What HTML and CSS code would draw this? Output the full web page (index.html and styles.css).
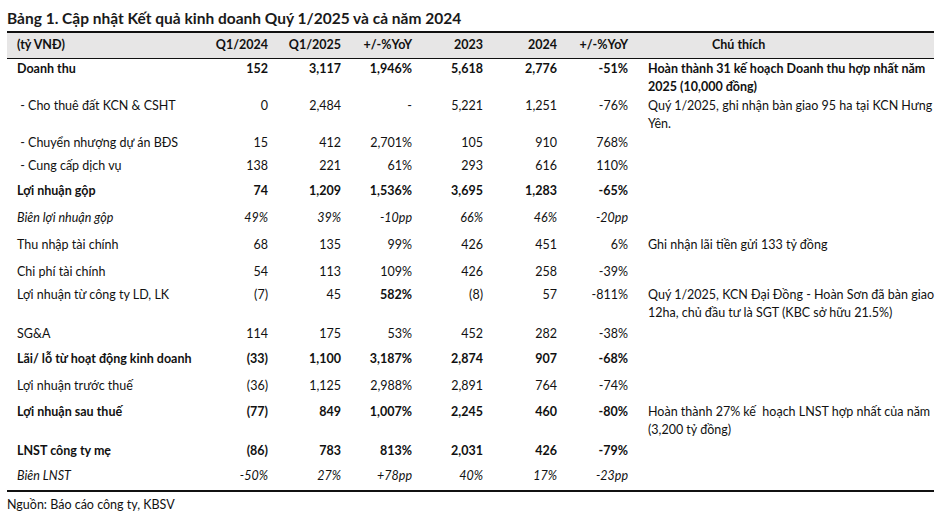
FILE: index.html
```html
<!DOCTYPE html>
<html lang="vi">
<head>
<meta charset="utf-8">
<title>Bảng 1</title>
<link rel="stylesheet" href="styles.css">
</head>
<body>
<div class="page">
  <div class="title">Bảng 1. Cập nhật Kết quả kinh doanh Quý 1/2025 và cả năm 2024</div>
  <table class="fin">
    <colgroup>
      <col class="c-label"><col class="c-a"><col class="c-b"><col class="c-c"><col class="c-d"><col class="c-e"><col class="c-f"><col class="c-note">
    </colgroup>
    <thead>
      <tr>
        <th class="lbl">(tỷ VNĐ)</th>
        <th>Q1/2024</th>
        <th>Q1/2025</th>
        <th>+/-%YoY</th>
        <th>2023</th>
        <th>2024</th>
        <th>+/-%YoY</th>
        <th class="note-h">Chú thích</th>
      </tr>
    </thead>
    <tbody>
      <tr class="b h37">
        <td class="lbl">Doanh thu</td><td>152</td><td>3,117</td><td>1,946%</td><td>5,618</td><td>2,776</td><td>-51%</td>
        <td class="note">Hoàn thành 31 kế hoạch Doanh thu hợp nhất năm<br>2025 (10,000 đồng)</td>
      </tr>
      <tr class="h37">
        <td class="lbl">&nbsp;- Cho thuê đất KCN &amp; CSHT</td><td>0</td><td>2,484</td><td>-</td><td>5,221</td><td>1,251</td><td>-76%</td>
        <td class="note">Quý 1/2025, ghi nhận bàn giao 95 ha tại KCN Hưng<br>Yên.</td>
      </tr>
      <tr class="h23">
        <td class="lbl">&nbsp;- Chuyển nhượng dự án BĐS</td><td>15</td><td>412</td><td>2,701%</td><td>105</td><td>910</td><td>768%</td><td class="note"></td>
      </tr>
      <tr class="h25">
        <td class="lbl">&nbsp;- Cung cấp dịch vụ</td><td>138</td><td>221</td><td>61%</td><td>293</td><td>616</td><td>110%</td><td class="note"></td>
      </tr>
      <tr class="b h27">
        <td class="lbl">Lợi nhuận gộp</td><td>74</td><td>1,209</td><td>1,536%</td><td>3,695</td><td>1,283</td><td>-65%</td><td class="note"></td>
      </tr>
      <tr class="i h27">
        <td class="lbl">Biên lợi nhuận gộp</td><td>49%</td><td>39%</td><td>-10pp</td><td>66%</td><td>46%</td><td>-20pp</td><td class="note"></td>
      </tr>
      <tr class="h27">
        <td class="lbl">Thu nhập tài chính</td><td>68</td><td>135</td><td>99%</td><td>426</td><td>451</td><td>6%</td>
        <td class="note">Ghi nhận lãi tiền gửi 133 tỷ đồng</td>
      </tr>
      <tr class="h23">
        <td class="lbl">Chi phí tài chính</td><td>54</td><td>113</td><td>109%</td><td>426</td><td>258</td><td>-39%</td><td class="note"></td>
      </tr>
      <tr class="h39">
        <td class="lbl">Lợi nhuận từ công ty LD, LK</td><td>(7)</td><td>45</td><td class="strong">582%</td><td>(8)</td><td>57</td><td>-811%</td>
        <td class="note">Quý 1/2025, KCN Đại Đồng - Hoàn Sơn đã bàn giao<br>12ha, chủ đầu tư là SGT (KBC sở hữu 21.5%)</td>
      </tr>
      <tr class="h25">
        <td class="lbl">SG&amp;A</td><td>114</td><td>175</td><td>53%</td><td>452</td><td>282</td><td>-38%</td><td class="note"></td>
      </tr>
      <tr class="b h27">
        <td class="lbl">Lãi/ lỗ từ hoạt động kinh doanh</td><td>(33)</td><td>1,100</td><td>3,187%</td><td>2,874</td><td>907</td><td>-68%</td><td class="note"></td>
      </tr>
      <tr class="h26">
        <td class="lbl">Lợi nhuận trước thuế</td><td>(36)</td><td>1,125</td><td>2,988%</td><td>2,891</td><td>764</td><td>-74%</td><td class="note"></td>
      </tr>
      <tr class="b h39">
        <td class="lbl">Lợi nhuận sau thuế</td><td>(77)</td><td>849</td><td>1,007%</td><td>2,245</td><td>460</td><td>-80%</td>
        <td class="note regular">Hoàn thành 27% kế&nbsp; hoạch LNST hợp nhất của năm<br>(3,200 tỷ đồng)</td>
      </tr>
      <tr class="b h25">
        <td class="lbl">LNST công ty mẹ</td><td>(86)</td><td>783</td><td>813%</td><td>2,031</td><td>426</td><td>-79%</td><td class="note"></td>
      </tr>
      <tr class="i h24 last">
        <td class="lbl">Biên LNST</td><td>-50%</td><td>27%</td><td>+78pp</td><td>40%</td><td>17%</td><td>-23pp</td><td class="note"></td>
      </tr>
    </tbody>
  </table>
  <div class="source">Nguồn: Báo cáo công ty, KBSV</div>
</div>
</body>
</html>
```
FILE: styles.css
```css
html, body {
  margin: 0;
  padding: 0;
  background: #ffffff;
}

.page {
  padding: 0 7px;
  font-family: Lato, "Liberation Sans", sans-serif;
  font-size: 12.5px;
  color: #111111;
}

.title {
  padding-top: 8px;
  line-height: 20px;
  height: 20px;
  margin-bottom: 3px;
  font-size: 15.5px;
  font-weight: 700;
  color: #1a1a1a;
}

.fin {
  width: 926px;
  table-layout: fixed;
  border-collapse: separate;
  border-spacing: 0;
}

.c-label { width: 191px; }
.c-a { width: 70px; }
.c-b { width: 73px; }
.c-c { width: 71px; }
.c-d { width: 71px; }
.c-e { width: 74px; }
.c-f { width: 71px; }
.c-note { width: 306px; }

.fin th {
  background: #e7e6e6;
  border-top: 2px solid #111111;
  border-bottom: 1px solid #111111;
  height: 24px;
  padding: 0 0 1px 0;
  font-weight: 700;
  text-align: right;
  vertical-align: middle;
  line-height: 18px;
  white-space: nowrap;
}

.fin th.lbl {
  text-align: left;
  padding-left: 10px;
}

.fin th.note-h {
  text-align: left;
  padding-left: 84px;
}

.fin td {
  padding: 1px 0 0 0;
  text-align: right;
  vertical-align: top;
  line-height: 18px;
  white-space: nowrap;
}

.fin td.lbl {
  text-align: left;
  padding-left: 10px;
}

.fin td.note {
  text-align: left;
  padding-left: 20px;
}

.fin tr.b td { font-weight: 700; }
.fin tr.b td.regular { font-weight: 400; }
.fin tr.i td { font-style: italic; }
.fin td.strong { font-weight: 700; }

.fin tr.last td {
  border-bottom: 2px solid #111111;
}

.h23 td { height: 22px; }
.h24 td { height: 23px; }
.h25 td { height: 24px; }
.h26 td { height: 25px; }
.h27 td { height: 26px; }
.h37 td { height: 36px; }
.h39 td { height: 38px; }

.source {
  margin-top: 4px;
  line-height: 18px;
  font-size: 12.5px;
}
```
